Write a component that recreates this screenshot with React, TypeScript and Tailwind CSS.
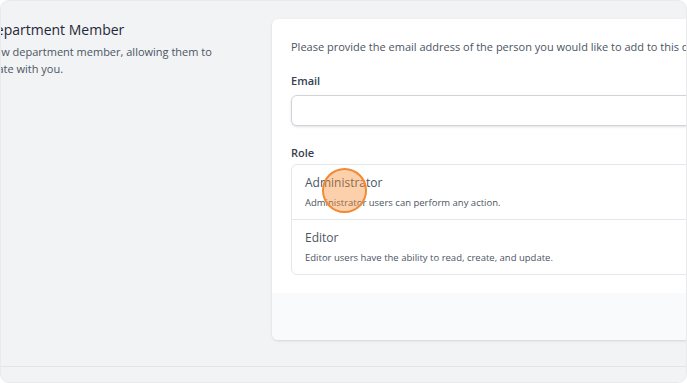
export default function App() {
  return (
    <div
      className="w-[687px] h-[383px] bg-white overflow-hidden"
      style={{ fontFamily: '"Open Sans", "Liberation Sans", sans-serif' }}
    >
      <div className="relative w-full h-full rounded-[9px] border border-[#e9eaee] bg-[#f2f3f5] overflow-hidden flex flex-col">
        <div className="flex pt-[18px] h-[365px] shrink-0">
          <div className="-ml-[45px] w-[316px] shrink-0">
            <h3 className="text-[14px] leading-[22px] font-medium text-[#1f2937]">
              Add Department Member
            </h3>
            <p className="mt-[2px] w-[262px] text-[11px] leading-[17px] text-[#4b5563]">
              Add a new department member, allowing them to collaborate with you.
            </p>
          </div>

          <div className="w-[440px] shrink-0 self-start rounded-l-md bg-white shadow">
            <div className="px-[19px] pt-[19px] pb-[18px]">
              <p className="text-[11px] leading-[17px] text-[#4b5563] whitespace-nowrap">
                Please provide the email address of the person you would like to add to this department.
              </p>

              <div className="mt-[17px]">
                <label className="block text-[11px] leading-[17px] font-semibold text-[#374151]">
                  Email
                </label>
                <input
                  type="email"
                  className="mt-[6px] block w-full h-[31px] rounded-md border border-[#d1d5db] bg-white shadow-sm"
                />
              </div>

              <div className="mt-[18px]">
                <label className="block text-[11px] leading-[17px] font-semibold text-[#374151]">
                  Role
                </label>
                <div className="relative mt-[3px] rounded-md border border-[#e5e7eb]">
                  <div className="px-[13px] pt-[10px] pb-[9px]">
                    <div className="text-[12px] leading-[16px] text-[#4b5563]">Administrator</div>
                    <div className="mt-[5px] text-[9.5px] leading-[14px] text-[#4b5563]">
                      Administrator users can perform any action.
                    </div>
                  </div>
                  <div className="border-t border-[#e5e7eb] px-[13px] pt-[10px] pb-[9px]">
                    <div className="text-[12px] leading-[16px] text-[#4b5563]">Editor</div>
                    <div className="mt-[5px] text-[9.5px] leading-[14px] text-[#4b5563]">
                      Editor users have the ability to read, create, and update.
                    </div>
                  </div>
                  <div className="absolute left-[30px] top-[3px] w-[45px] h-[45px] rounded-full border-2 border-[#f28a35] bg-[#f58a2e]/40" />
                </div>
              </div>
            </div>
            <div className="h-[47px] rounded-bl-md bg-[#f9fafb]" />
          </div>
        </div>
        <div className="border-t border-[#e2e4e8] flex-1" />
      </div>
    </div>
  )
}
